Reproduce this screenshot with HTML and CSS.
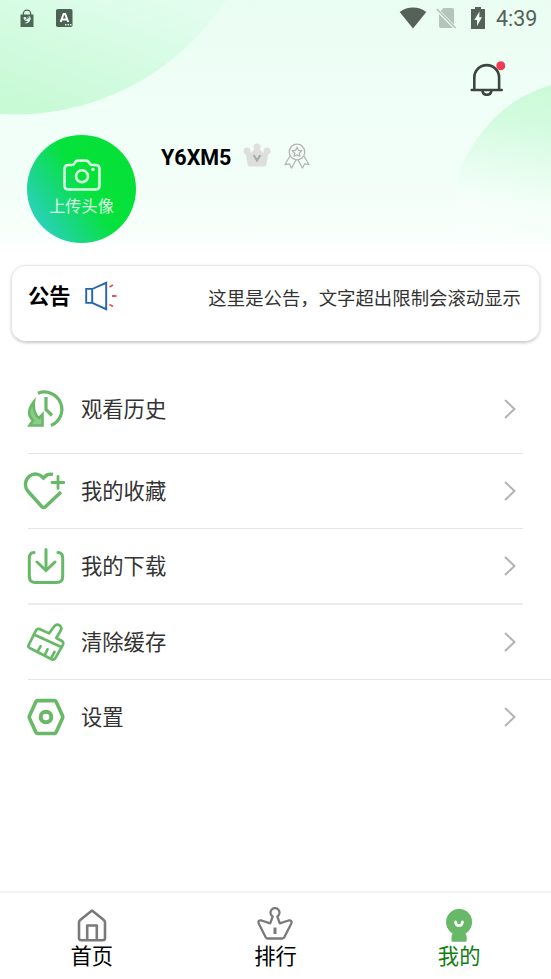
FILE: index.html
```html
<!DOCTYPE html>
<html lang="zh-CN">
<head>
<meta charset="utf-8">
<title>我的</title>
<link rel="stylesheet" href="styles.css">
</head>
<body>
<header class="hero">
  <svg class="hero-art" viewBox="0 0 551 244" aria-hidden="true">
    <defs>
      <linearGradient id="ga" x1="1" y1="0" x2="0.25" y2="1"><stop offset="0.1" stop-color="#e2fdee"/><stop offset="1" stop-color="#c8fad6"/></linearGradient>
      <linearGradient id="gb" x1="0.6" y1="0" x2="0.5" y2="1"><stop offset="0" stop-color="#cdfbd9"/><stop offset="0.22" stop-color="#d3fbdf"/><stop offset="0.75" stop-color="#f5fffa"/><stop offset="1" stop-color="#f9fffc"/></linearGradient>
    </defs>
    <path fill="url(#ga)" d="M0 0H226A252 252 0 0 1 0 114Z"/>
    <path fill="url(#gb)" d="M551 85Q532 91 517 100Q501 110 488 125Q477 137 470 150Q458 168 457 187V244H551Z"/>
  </svg>
  <div class="status">
    <svg class="st-bag" width="14" height="18" viewBox="0 0 14 18"><path d="M3.3 6V4.8a3.7 3.7 0 0 1 7.4 0V6" fill="none" stroke="#4e6757" stroke-width="1.3"/><path d="M.5 5.500h13V18H.5z" fill="#4e6757"/><path d="M3.400 8.500c1.500-1 2.500-.6 3 .6l3.200-2.200c1.600 1.200 1.300 3.800-.1 5.500-1.500 1.900-3.700 2.400-5.200 1.500 1.600-.3 2.800-1 3.500-2-2 .5-4-.6-4.400-3.400z" fill="#d9fbe4"/><path d="m5.500 10.500 4-2.500" stroke="#4e6757"/></svg>
    <svg class="st-a" width="17" height="18" viewBox="0 0 17 18"><rect width="16.500" height="18" rx="1.800" fill="#4a6353"/><path d="m4.600 13 3-8h1.600l3 8M5.800 10.500H11" fill="none" stroke="#fff" stroke-width="2"/><path d="M9 15.800h6.500" stroke="#e4f7ea" stroke-width="1.500" stroke-dasharray="1.500 1"/></svg>
    <span class="grow"></span>
    <svg class="st-wifi" width="28" height="22" viewBox="0 0 28 22"><path d="M.7 5C8.500-.9 19.500-.9 27.300 5L14 21.500Z" fill="#566158"/></svg>
    <svg class="st-sim" width="21" height="22" viewBox="0 0 21 22"><path d="M7.500 1H16q2 0 2 2v14.500L4.700 4zM3 7l14 14H5q-2 0-2-2z" fill="#b4c4b9"/><path d="m.8 2 18.800 19" stroke="#b4c4b9" stroke-width="1.600"/></svg>
    <svg class="st-bat" width="14" height="22" viewBox="0 0 14 22"><path d="M4 0h6v2h4v20H0V2h4z" fill="#566158"/><path d="M8.500 4.500 3.300 13H6v6l5-8.700H8.300z" fill="#effff5"/></svg>
    <time class="clock">4:39</time>
  </div>
  <div class="tools">
    <svg width="36" height="36" viewBox="0 0 36 36"><g fill="none" stroke="#3c4540" stroke-width="2.600"><path d="M5.300 30V17.500a12.200 12.200 0 0 1 24.800 0V30"/><path d="M2.700 30h30" stroke-linecap="round"/><path d="M13.500 30.800c.5 5.300 8.300 5.300 8.800 0"/></g><circle cx="31.800" cy="5.800" r="4.500" fill="#f23a54"/></svg>
  </div>
  <div class="profile">
    <div class="avatar">
      <svg width="38" height="32" viewBox="0 0 38 32"><g fill="none" stroke="#d9ffe3" stroke-width="2.600" stroke-linejoin="round"><path d="M5.500 6H9q1.500 0 2.500-1.700L12.300 3q.9-1.400 2.700-1.400h8q1.800 0 2.700 1.400l.8 1.300Q27.500 6 29 6h3.500q4 0 4 4v16.500q0 4-4 4h-27q-4 0-4-4V10q0-4 4-4Z"/><circle cx="19" cy="17.300" r="6"/></g><circle cx="30" cy="10.500" r="1.700" fill="#d9ffe3"/></svg>
      <span>上传头像</span>
    </div>
    <strong class="name">Y6XM5</strong>
    <svg class="crown" width="28" height="24" viewBox="0 0 28 24"><g fill="#dedede"><path d="m2 7 5.500 3L14 4l6.500 6L26 7l-2.500 14q-.4 2.500-2.500 2.500H7q-2.100 0-2.500-2.500z"/><circle cx="14" cy="4" r="3.500"/><circle cx="4" cy="8" r="3.500"/><circle cx="24" cy="8" r="3.500"/></g><path d="m10.700 12 3.300 5.500 3.300-5.500" fill="none" stroke="#a9a9a9" stroke-width="2"/></svg>
    <svg class="medal" width="26" height="26" viewBox="0 0 26 26" fill="none" stroke="#b3b6b4" stroke-width="1.300" stroke-linejoin="round"><circle cx="13" cy="9" r="7.800"/><path d="m13 4.300 1.400 3 3.300.4-2.400 2.300.6 3.300-2.900-1.600-2.900 1.600.6-3.300-2.400-2.300 3.300-.4zM6 13 1 21.500l4.300-.7L7.500 25l4.500-8M20 13l5 8.500-4.300-.7-2.200 4.200-4.500-8"/></svg>
  </div>
</header>

<section class="notice">
  <h2>公告</h2>
  <svg width="32" height="30" viewBox="0 0 32 30" fill="none"><path d="M1.200 7.900h6v14h-6zM7.200 8l14-6.200v26.400l-14-6.300" stroke="#2467a8" stroke-width="1.900"/><path d="m24.500 6 3.500-2M27 15h4.500M24.500 23.500l3.500 2" stroke="#e0574c" stroke-width="1.900"/></svg>
  <p>这里是公告，文字超出限制会滚动显示</p>
</section>

<nav class="menu">
  <a class="item first">
    <svg class="ico" viewBox="0 0 38 38" fill="none" stroke="#67b967" stroke-width="3.200"><path d="M11 3.300A17.200 17.200 0 1 1 24 35.500M19 7v12.500l6 6"/><path d="M7 11.500C1.500 18.500.2 25 6 30.500L2.500 35.500h13V24.500l-3.500 3.500C7.500 24.500 6 19.500 7 11.500Z" fill="#8ccb8c" stroke-width="2.600"/></svg>
    <span>观看历史</span><svg class="arrow" viewBox="0 0 12 20"><path d="m1 1 9.500 9L1 19"/></svg>
  </a>
  <a class="item">
    <svg class="ico heart" viewBox="0 0 42 38" fill="none" stroke="#67b967" stroke-width="3.400"><path d="M30 2.500C25.500 1.200 23.500 3 20.500 6 16.500 1.500 10.500.8 6.300 4.200 1.500 8.300 1.200 15 5.200 19.500L18.700 34.500q2 2 4 0L38 20"/><path d="M35 4.500v12M29 10.500h12" stroke-width="2.800" stroke-linecap="round"/></svg>
    <span>我的收藏</span><svg class="arrow" viewBox="0 0 12 20"><path d="m1 1 9.500 9L1 19"/></svg>
  </a>
  <a class="item thick">
    <svg class="ico" viewBox="0 0 38 38" fill="none" stroke="#67b967" stroke-width="3" stroke-linecap="round"><path d="M7 5.500Q2.300 5.700 2.300 11v18.500q0 6 6 6h21.400q6 0 6-6V11q0-5.300-4.700-5.500M19 2.500v21M10 15l9 8.500 9-8.500"/></svg>
    <span>我的下载</span><svg class="arrow" viewBox="0 0 12 20"><path d="m1 1 9.500 9L1 19"/></svg>
  </a>
  <a class="item wide">
    <svg class="ico" viewBox="0 0 38 38" fill="none" stroke="#67b967" stroke-width="2.700" stroke-linejoin="round" stroke-linecap="round"><path d="M12.500 6 22 10.400 27.500 3q2.300-2.500 5-.7 2.700 2 1.500 4.700L29.300 15l6 3.300q1.500 1.300.6 3.500L28.200 35.300q-1.300 2-3.600.9L2.700 25q-2-1.100-1-3L9 7.300q1.200-2 3.500-1.300ZM8 12 34.800 24.200M13.500 23.300l-2.800 5M20.500 26.300l-2.800 6M27.500 29l-3.300 6"/></svg>
    <span>清除缓存</span><svg class="arrow" viewBox="0 0 12 20"><path d="m1 1 9.500 9L1 19"/></svg>
  </a>
  <a class="item last">
    <svg class="ico" viewBox="0 0 38 38" fill="none" stroke="#67b967" stroke-linejoin="round"><path d="M10.500 2.600h17q1 0 1.500 1L35.500 17.700q.6 1.300 0 2.600L29 34.500q-.5 1-1.500 1h-17q-1 0-1.500-1L2.500 20.300q-.6-1.300 0-2.600L9 3.600q.5-1 1.500-1Z" stroke-width="3.600"/><circle cx="19" cy="19" r="5.300" stroke-width="4"/></svg>
    <span>设置</span><svg class="arrow" viewBox="0 0 12 20"><path d="m1 1 9.500 9L1 19"/></svg>
  </a>
</nav>

<footer class="tabs">
  <a class="tab">
    <svg width="36" height="36" viewBox="0 0 36 36" fill="none" stroke="#7a7a7a" stroke-width="2.600" stroke-linejoin="round"><path d="M5 15.500q0-1.500 1.200-2.400L18 3.500l11.800 9.600q1.200.9 1.200 2.400V31q0 2.200-2.200 2.200H7.200Q5 33.200 5 31ZM13.200 33V18.500h9.600V33"/></svg>
    <span>首页</span>
  </a>
  <a class="tab">
    <svg width="36" height="36" viewBox="0 0 36 36" fill="none" stroke="#7a7a7a" stroke-width="2.300" stroke-linejoin="round"><path d="M15.700 9.500A4.500 4.500 0 1 1 20.300 9.500L22.800 16.300 31.500 13.500Q35.500 13 34.300 16.500L27.300 30.300q-.6 1.200-2 1.200H10.700q-1.400 0-2-1.200L1.700 16.500Q.5 13 4.500 13.500L13.200 16.300Z"/><path d="M18 20.500v6.500" stroke-width="3"/></svg>
    <span>排行</span>
  </a>
  <a class="tab active">
    <svg width="36" height="36" viewBox="0 0 36 36"><path d="M18 1.700a13.400 13.400 0 0 1 6.500 25q1.200 1 1.200 3.500v3q0 1.500-1.500 1.500H12q-1.500 0-1.500-1.500v-3q0-2.500 1.200-3.500A13.400 13.400 0 0 1 18 1.700Z" fill="#67b967"/><path d="M14.500 14.800c.3 5 6.700 5 7 0" fill="none" stroke="#fff" stroke-width="2.600" stroke-linecap="round"/></svg>
    <span>我的</span>
  </a>
</footer>
</body>
</html>
```
FILE: styles.css
```css
* { box-sizing: border-box; }
body {
  margin: 0;
  height: 979px;
  display: flex;
  flex-direction: column;
  overflow: hidden;
  background: #fff;
  color: #333;
  font-family: Roboto, "Noto Sans CJK SC", sans-serif;
}
svg { display: block; flex: none; }

.hero {
  position: relative;
  height: 244px;
  flex: none;
  background: linear-gradient(#eafdf2 0, #f0fff8 110px, #f2fef8 180px, #f9fffc 244px);
}
.hero-art { position: absolute; inset: 0; width: 551px; height: 244px; }
.status, .tools, .profile { position: relative; display: flex; }
.status { height: 36px; align-items: center; padding: 0 12px 0 20px; }
.st-a { margin-left: 22px; }
.grow { flex: 1; }
.st-sim { margin-left: 9px; }
.st-bat { margin-left: 14px; }
.clock { margin-left: 11px; padding-top: 2px; font-size: 21.500px; line-height: 34px; color: #566158; width: 43px; white-space: nowrap; }
.tools { justify-content: flex-end; padding: 24px 46px 0 0; height: 99px; }
.profile { padding-left: 27px; align-items: flex-start; }
.avatar {
  width: 109px;
  height: 108px;
  border-radius: 50%;
  background: linear-gradient(57deg, #2fd0cb 8%, #1cd68c 28%, #05e23b 54%, #05e035 100%);
  display: flex;
  flex-direction: column;
  align-items: center;
  padding-top: 24px;
  color: #d9ffe3;
  font-size: 16.200px;
  line-height: 24px;
}
.avatar span { margin-top: 4px; }
.name { margin: 9px 0 0 25px; width: 71px; font-size: 21.500px; line-height: 28px; color: #000; }
.crown { margin: 8px 0 0 11px; }
.medal { margin: 8px 0 0 13px; }

.notice {
  flex: none;
  height: 77px;
  margin: 21px 11px 0;
  padding: 16px 20px 0 16px;
  border: 1px solid #e8e8e8;
  border-bottom-color: #d0d0d0;
  border-radius: 15px;
  box-shadow: 0 1px 3px rgba(0, 0, 0, .22);
  display: flex;
  align-items: flex-start;
}
.notice h2 { margin: 0; font-size: 21.300px; line-height: 30px; color: #000; font-weight: 700; }
.notice svg { margin: -1px 0 0 14px; }
.notice p { margin: 1px -2px 0 auto; font-size: 18.400px; line-height: 32px; white-space: nowrap; }

.menu { flex: 1; padding-top: 22px; }
.item {
  height: 75px;
  margin: 0 28px;
  border-bottom: 1px solid #e4e4e4;
  display: flex;
  align-items: center;
  font-size: 21.300px;
  line-height: 30px;
}
.item.first { height: 90px; }
.item.thick { height: 76px; border-bottom: 2px solid #ebebeb; }
.item.wide { margin-right: 0; padding-right: 28px; }
.item.last { height: 73px; border-bottom: 0; }
.item span { flex: 1; margin: 2px 0 0 16px; }
.ico { width: 38px; height: 38px; margin-left: -1px; }
.heart { width: 42px; margin-left: -5px; }
.arrow { width: 12px; height: 20px; margin-right: 7px; fill: none; stroke: #b3b3b3; stroke-width: 2; }

.tabs {
  flex: none;
  height: 88px;
  border-top: 2px solid #f2f2f2;
  display: grid;
  grid-template-columns: repeat(3, 1fr);
}
.tab {
  display: flex;
  flex-direction: column;
  align-items: center;
  padding-top: 14px;
  font-size: 21.300px;
  line-height: 30px;
  color: #000;
}
.tab span { margin-top: -1px; }
.active { color: #138013; }
```
